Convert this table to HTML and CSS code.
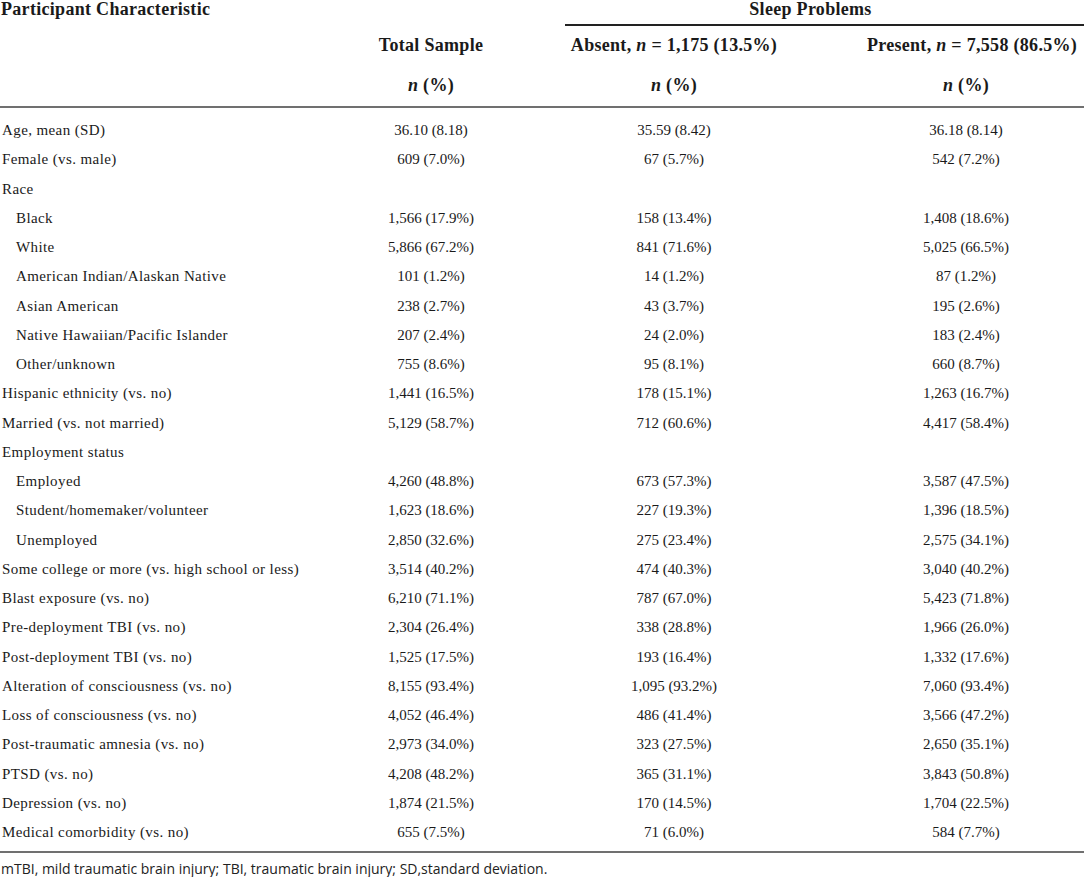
FILE: index.html
```html
<!DOCTYPE html>
<html lang="en">
<head>
<meta charset="utf-8">
<title>Participant characteristics by sleep problems</title>
<link rel="stylesheet" href="styles.css">
</head>
<body>
<table class="tbl">
  <colgroup>
    <col class="c-label">
    <col class="c-total">
    <col class="c-absent">
    <col class="c-present">
  </colgroup>
  <thead>
    <tr class="h1">
      <th class="lbl-head">Participant Characteristic</th>
      <th></th>
      <th colspan="2" class="group"><div class="group-inner">Sleep Problems</div></th>
    </tr>
    <tr class="h2">
      <th></th>
      <th>Total Sample</th>
      <th>Absent, <i>n</i> = 1,175 (13.5%)</th>
      <th class="present">Present, <i>n</i> = 7,558 (86.5%)</th>
    </tr>
    <tr class="h3">
      <th></th>
      <th><i>n</i> (%)</th>
      <th><i>n</i> (%)</th>
      <th><i>n</i> (%)</th>
    </tr>
  </thead>
  <tbody>
    <tr class="first"><td>Age, mean (SD)</td><td>36.10 (8.18)</td><td>35.59 (8.42)</td><td>36.18 (8.14)</td></tr>
    <tr><td>Female (vs. male)</td><td>609 (7.0%)</td><td>67 (5.7%)</td><td>542 (7.2%)</td></tr>
    <tr><td>Race</td><td></td><td></td><td></td></tr>
    <tr><td class="ind">Black</td><td>1,566 (17.9%)</td><td>158 (13.4%)</td><td>1,408 (18.6%)</td></tr>
    <tr><td class="ind">White</td><td>5,866 (67.2%)</td><td>841 (71.6%)</td><td>5,025 (66.5%)</td></tr>
    <tr><td class="ind">American Indian/Alaskan Native</td><td>101 (1.2%)</td><td>14 (1.2%)</td><td>87 (1.2%)</td></tr>
    <tr><td class="ind">Asian American</td><td>238 (2.7%)</td><td>43 (3.7%)</td><td>195 (2.6%)</td></tr>
    <tr><td class="ind">Native Hawaiian/Pacific Islander</td><td>207 (2.4%)</td><td>24 (2.0%)</td><td>183 (2.4%)</td></tr>
    <tr><td class="ind">Other/unknown</td><td>755 (8.6%)</td><td>95 (8.1%)</td><td>660 (8.7%)</td></tr>
    <tr><td>Hispanic ethnicity (vs. no)</td><td>1,441 (16.5%)</td><td>178 (15.1%)</td><td>1,263 (16.7%)</td></tr>
    <tr><td>Married (vs. not married)</td><td>5,129 (58.7%)</td><td>712 (60.6%)</td><td>4,417 (58.4%)</td></tr>
    <tr><td>Employment status</td><td></td><td></td><td></td></tr>
    <tr><td class="ind">Employed</td><td>4,260 (48.8%)</td><td>673 (57.3%)</td><td>3,587 (47.5%)</td></tr>
    <tr><td class="ind">Student/homemaker/volunteer</td><td>1,623 (18.6%)</td><td>227 (19.3%)</td><td>1,396 (18.5%)</td></tr>
    <tr><td class="ind">Unemployed</td><td>2,850 (32.6%)</td><td>275 (23.4%)</td><td>2,575 (34.1%)</td></tr>
    <tr><td>Some college or more (vs. high school or less)</td><td>3,514 (40.2%)</td><td>474 (40.3%)</td><td>3,040 (40.2%)</td></tr>
    <tr><td>Blast exposure (vs. no)</td><td>6,210 (71.1%)</td><td>787 (67.0%)</td><td>5,423 (71.8%)</td></tr>
    <tr><td>Pre-deployment TBI (vs. no)</td><td>2,304 (26.4%)</td><td>338 (28.8%)</td><td>1,966 (26.0%)</td></tr>
    <tr><td>Post-deployment TBI (vs. no)</td><td>1,525 (17.5%)</td><td>193 (16.4%)</td><td>1,332 (17.6%)</td></tr>
    <tr><td>Alteration of consciousness (vs. no)</td><td>8,155 (93.4%)</td><td>1,095 (93.2%)</td><td>7,060 (93.4%)</td></tr>
    <tr><td>Loss of consciousness (vs. no)</td><td>4,052 (46.4%)</td><td>486 (41.4%)</td><td>3,566 (47.2%)</td></tr>
    <tr><td>Post-traumatic amnesia (vs. no)</td><td>2,973 (34.0%)</td><td>323 (27.5%)</td><td>2,650 (35.1%)</td></tr>
    <tr><td>PTSD (vs. no)</td><td>4,208 (48.2%)</td><td>365 (31.1%)</td><td>3,843 (50.8%)</td></tr>
    <tr><td>Depression (vs. no)</td><td>1,874 (21.5%)</td><td>170 (14.5%)</td><td>1,704 (22.5%)</td></tr>
    <tr class="last"><td>Medical comorbidity (vs. no)</td><td>655 (7.5%)</td><td>71 (6.0%)</td><td>584 (7.7%)</td></tr>
  </tbody>
</table>
<p class="note">mTBI, mild traumatic brain injury; TBI, traumatic brain injury; SD,standard deviation.</p>
</body>
</html>
```

FILE: styles.css
```css
html, body {
  margin: 0;
  padding: 0;
  background: #ffffff;
}

body {
  width: 1084px;
  color: #1a1a1a;
  font-family: "Liberation Serif", "Times New Roman", serif;
}

.tbl {
  width: 1084px;
  border-collapse: collapse;
  table-layout: fixed;
  font-size: 15px;
}

.c-label { width: 362px; }
.c-total { width: 138px; }
.c-absent { width: 348px; }
.c-present { width: 236px; }

th {
  font-weight: bold;
  font-size: 18px;
  letter-spacing: 0.3px;
  text-align: center;
  padding: 0;
  white-space: nowrap;
}

.h1 th {
  height: 26px;
  vertical-align: top;
  line-height: 18px;
}

.lbl-head {
  text-align: left;
  padding-left: 1px;
}

.group-inner {
  margin-left: 65px;
  padding-right: 28px;
  height: 24px;
  border-bottom: 2px solid #222;
}

.h2 th {
  height: 38px;
  vertical-align: middle;
}

.h2 .present {
  padding-left: 12px;
}

.h3 th {
  height: 42px;
  vertical-align: middle;
  border-bottom: 2px solid #707070;
}

td {
  padding: 5px 0;
  line-height: 19.25px;
  text-align: center;
  white-space: nowrap;
}

td:first-child {
  text-align: left;
  padding-left: 2px;
  letter-spacing: 0.4px;
}

td.ind {
  padding-left: 16px;
}

tr.first td {
  padding-top: 13px;
}

tr.last td {
  padding-bottom: 9px;
  border-bottom: 2px solid #707070;
}

.note {
  margin: 8px 0 0 1px;
  font-family: "Open Sans", "Noto Sans", sans-serif;
  font-size: 14px;
  line-height: 16px;
  color: #222;
}
```
